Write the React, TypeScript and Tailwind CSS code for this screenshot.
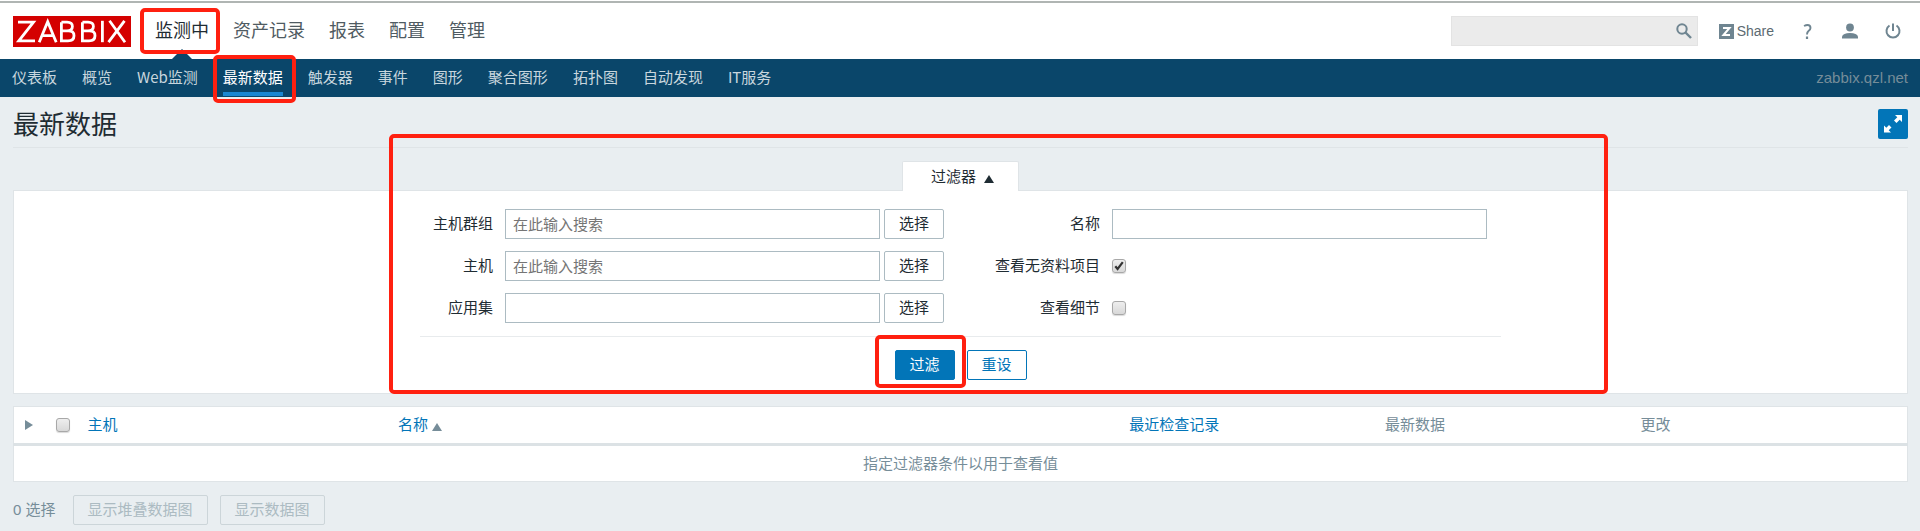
import React from 'react';

const MAIN = ['监测中', '资产记录', '报表', '配置', '管理'];
const SUB = ['仪表板', '概览', 'Web监测', '最新数据', '触发器', '事件', '图形', '聚合图形', '拓扑图', '自动发现', 'IT服务'];

const FIELD = 'h-[30px] w-[375px] border border-[#acbbc2] bg-white px-[7px] text-[15px] text-[#1f2c33] outline-none placeholder:text-[#757575]';
const BTN = 'h-[30px] rounded-[2px] border px-[14px] text-[15px] leading-7';
const MARK = 'pointer-events-none absolute z-10 rounded-[5px] border-4 border-[#ff2010]';

function Check({ id, label, checked }: { id: string; label?: string; checked?: boolean }) {
  return (
    <span className="relative inline-flex h-[14px] w-[14px]">
      <input
        id={id}
        type="checkbox"
        aria-label={label}
        defaultChecked={checked}
        className="peer h-[14px] w-[14px] appearance-none rounded-[3px] border border-[#a8a8a8] bg-linear-to-b from-[#eeeeee] to-[#d8d8d8] shadow-[0_1px_1px_rgba(0,0,0,0.15)]"
      />
      <svg viewBox="0 0 14 14" className="pointer-events-none absolute inset-0 hidden h-[14px] w-[14px] peer-checked:block">
        <path d="M3.3 7.2l2.3 2.8L10.8 3.2" fill="none" stroke="#333" strokeWidth="2.2" />
      </svg>
    </span>
  );
}

function Picker({ id, label, placeholder }: { id: string; label: string; placeholder?: string }) {
  return (
    <div className="flex items-center">
      <label htmlFor={id} className="w-[73px] text-right">{label}</label>
      <input id={id} type="text" placeholder={placeholder} className={`${FIELD} ml-3`} />
      <button type="button" className={`${BTN} ml-1 w-[60px] border-[#acbbc2] bg-white`}>选择</button>
    </div>
  );
}

export default function App() {
  return (
    <div className="min-h-screen bg-[#e9eef1] font-['Liberation_Sans','Noto_Sans_CJK_SC',sans-serif] text-[15px] leading-5 text-[#1f2c33]">
      <div className="h-[3px] border-t border-t-white bg-[#b0b5b3]" />
      <header className="flex h-14 items-center bg-white pr-[19px] pl-[13px]">
        <a href="#" aria-label="ZABBIX" className="flex h-[31px] w-[118px] items-center justify-center bg-[#d40000]">
          <svg viewBox="0 0 118 31" className="h-[31px] w-[118px]">
            <g fill="none" stroke="#fff" strokeWidth="2.8">
              <path d="M5 6.200H20.500L5.800 24.800H22" />
              <path d="M26.200 26.200L34.700 5.600L43.200 26.200M29.500 19.700H40" />
              <path d="M48.400 6.200V24.800H55Q61 24.800 61 19.700T55 14.800H48.400M54 14.800Q59.400 14.500 59.400 10.400T54 6.200H48.400" />
              <path d="M69.400 6.200V24.800H76Q82 24.800 82 19.700T76 14.800H69.400M75 14.800Q80.400 14.500 80.400 10.400T75 6.200H69.400" />
              <path d="M89.400 4.800V26.200" />
              <path d="M95.500 26.200L111.500 4.800M96.500 4.800L112 26.200" />
            </g>
          </svg>
        </a>
        <nav className="ml-6 flex gap-6 text-[18px] leading-6">
          {MAIN.map((t, i) => (
            <div key={t} className="relative">
              <a href="#" className={i === 0 ? 'text-[#1f2c33]' : 'text-[#4f5b62]'}>{t}</a>
              {i === 0 && (
                <>
                  <span className={`${MARK} top-[-11px] left-[-15px] h-[46px] w-[80px]`} />
                  <svg viewBox="0 0 20 10" className="absolute top-[30px] left-[17px] h-[10px] w-5">
                    <path d="M0 10L10 0L20 10Z" fill="#0a466a" />
                  </svg>
                </>
              )}
            </div>
          ))}
        </nav>
        <div className="ml-auto flex items-center text-[#6f8591]">
          <div className="flex h-[30px] w-[247px] items-center border border-[#e3e3e3] bg-[#ebebeb]">
            <input type="text" aria-label="搜索" className="h-7 min-w-0 flex-1 bg-transparent px-2 outline-none" />
            <button type="button" aria-label="搜索" className="mr-[5px]">
              <svg viewBox="0 0 16 16" className="h-4 w-4">
                <circle cx="6" cy="6" r="4.700" fill="none" stroke="currentColor" strokeWidth="2" />
                <path d="M9.500 9.500L15 15" stroke="currentColor" strokeWidth="2.400" />
              </svg>
            </button>
          </div>
          <a href="#" className="ml-[21px] flex items-center gap-[3px] text-[14px]">
            <svg viewBox="0 0 15 15" className="h-[15px] w-[15px]">
              <path d="M0 0H15V15H0Z" fill="currentColor" />
              <path d="M4 4H10.500L4.500 11H11" fill="none" stroke="#fff" strokeWidth="2" />
            </svg>
            <span className="text-[#5c6a72]">Share</span>
          </a>
          <a href="#" aria-label="帮助" className="ml-[29px]">
            <svg viewBox="0 0 9 15" className="h-[15px] w-[9px]">
              <path d="M1 2Q3 1 4.500 1Q7.500 1 7.500 4Q7.500 5.500 5.500 7Q4 8.200 4 10.500" fill="none" stroke="currentColor" strokeWidth="1.900" />
              <path d="M2.900 12.500H5.100V15H2.900Z" fill="currentColor" />
            </svg>
          </a>
          <a href="#" aria-label="用户" className="ml-[30px]">
            <svg viewBox="0 0 16 16" className="h-4 w-4" fill="currentColor">
              <circle cx="8" cy="4.500" r="3.900" />
              <path d="M0 15.500V13.500Q1 10 8 10T16 13.500V15.500Z" />
            </svg>
          </a>
          <a href="#" aria-label="退出" className="ml-[27px]">
            <svg viewBox="0 0 16 16" className="h-4 w-4" fill="none" stroke="currentColor" strokeWidth="2">
              <path d="M8 0.500V8M4.500 2.500A6.500 6.500 0 1 0 11.500 2.500" />
            </svg>
          </a>
        </div>
      </header>

      <div className="flex h-[38px] items-center bg-[#0a466a] px-3 text-[#c8d6de]">
        <nav className="flex h-full gap-[25px] font-['Noto_Sans_CJK_SC',sans-serif]">
          {SUB.map((t, i) => (
            <div key={t} className="relative">
              <a
                href="#"
                className={i === 3 ? 'block h-[37px] border-b-4 border-[#1a87d1] pt-2 text-white' : 'block pt-2'}
              >
                {t}
              </a>
              {i === 3 && <span className={`${MARK} -top-1 -left-[10px] h-12 w-[83px]`} />}
            </div>
          ))}
        </nav>
        <span className="ml-auto text-[#768d99]">zabbix.qzl.net</span>
      </div>

      <main className="pr-3 pl-[13px]">
        <div className="flex h-[51px] items-start justify-between border-b border-[#dfe4e7] pt-3">
          <h1 className="text-[26px] leading-8">最新数据</h1>
          <button type="button" aria-label="全屏" className="flex h-[30px] w-[30px] items-center justify-center rounded-[2px] bg-[#0275b8]">
            <svg viewBox="0 0 20 20" className="h-5 w-5" fill="#fff">
              <path d="M12 1H19V8L16.700 5.700L13.500 9L11 6.500L14.300 3.300Z" />
              <path d="M1 11.500L3.300 13.800L6 11L8.500 13.500L5.700 16.300L8 18.500H1Z" />
            </svg>
          </button>
        </div>

        <form className="relative mt-[13px]" onSubmit={(e) => e.preventDefault()}>
          <div className="relative z-[1] flex justify-center">
            <button type="button" className="-mb-px flex h-[30px] items-center gap-2 rounded-t-[2px] border border-b-0 border-[#dfe4e7] bg-white pr-6 pl-7">
              过滤器
              <svg viewBox="0 0 10 8" className="mt-1 h-2 w-[10px]"><path d="M0 8L5 0L10 8Z" fill="#1f2c33" /></svg>
            </button>
          </div>
          <div className="flex flex-col items-center border border-[#dfe4e7] bg-white pt-[18px] pb-[13px]">
            <div className="flex w-[1081px] justify-between border-b border-[#e8ebed] pr-[14px] pb-[13px]">
              <div className="flex flex-col gap-3">
                <Picker id="groups" label="主机群组" placeholder="在此输入搜索" />
                <Picker id="hosts" label="主机" placeholder="在此输入搜索" />
                <Picker id="application" label="应用集" />
              </div>
              <div className="grid grid-cols-[auto_375px] auto-rows-[30px] items-center gap-x-3 gap-y-3">
                <label htmlFor="name" className="text-right">名称</label>
                <input id="name" type="text" className={FIELD} />
                <label htmlFor="nodata" className="text-right">查看无资料项目</label>
                <Check id="nodata" checked />
                <label htmlFor="details" className="text-right">查看细节</label>
                <Check id="details" />
              </div>
            </div>
            <div className="mt-[13px] flex gap-3">
              <div className="relative flex">
                <button type="submit" className={`${BTN} w-[60px] border-[#0275b8] bg-[#0275b8] text-white`}>过滤</button>
                <span className={`${MARK} -top-[15px] -left-5 h-[53px] w-[91px]`} />
              </div>
              <button type="reset" className={`${BTN} w-[60px] border-[#0275b8] bg-white text-[#0275b8]`}>重设</button>
            </div>
          </div>
          <span className={`${MARK} -top-[27px] left-[376px] h-[260px] w-[1219px]`} />
        </form>

        <table className="mt-3 w-full table-fixed border-collapse border border-[#dfe4e7] bg-white text-left">
          <colgroup>
            <col className="w-[42px]" />
            <col className="w-8" />
            <col className="w-[16.4%]" />
            <col className="w-[38.6%]" />
            <col className="w-[13.5%]" />
            <col className="w-[13.5%]" />
            <col />
          </colgroup>
          <thead>
            <tr className="h-[38px] border-b-3 border-[#dce2e5] text-[#768d99]">
              <th className="pl-[11px]">
                <button type="button" aria-label="展开" className="block">
                  <svg viewBox="0 0 8 10" className="h-[10px] w-2"><path d="M0 0L8 5L0 10Z" fill="#768d99" /></svg>
                </button>
              </th>
              <th><div className="flex"><Check id="all" label="全选" /></div></th>
              <th className="font-normal"><a href="#" className="text-[#0275b8]">主机</a></th>
              <th className="font-normal">
                <a href="#" className="flex items-center gap-1 text-[#0275b8]">
                  名称
                  <svg viewBox="0 0 10 8" className="mt-1 h-2 w-[10px]"><path d="M0 8L5 0L10 8Z" fill="#768d99" /></svg>
                </a>
              </th>
              <th className="font-normal"><a href="#" className="text-[#0275b8]">最近检查记录</a></th>
              <th className="font-normal">最新数据</th>
              <th className="font-normal">更改</th>
            </tr>
          </thead>
          <tbody>
            <tr className="h-[37px]">
              <td colSpan={7} className="text-center text-[#768d99]">指定过滤器条件以用于查看值</td>
            </tr>
          </tbody>
        </table>

        <div className="mt-[13px] flex items-center text-[#768d99]">
          <span>0 选择</span>
          <button type="button" disabled className={`${BTN} ml-[17px] border-[#ccd5d9] text-[#acbbc2]`}>显示堆叠数据图</button>
          <button type="button" disabled className={`${BTN} ml-3 border-[#ccd5d9] text-[#acbbc2]`}>显示数据图</button>
        </div>
      </main>
    </div>
  );
}
